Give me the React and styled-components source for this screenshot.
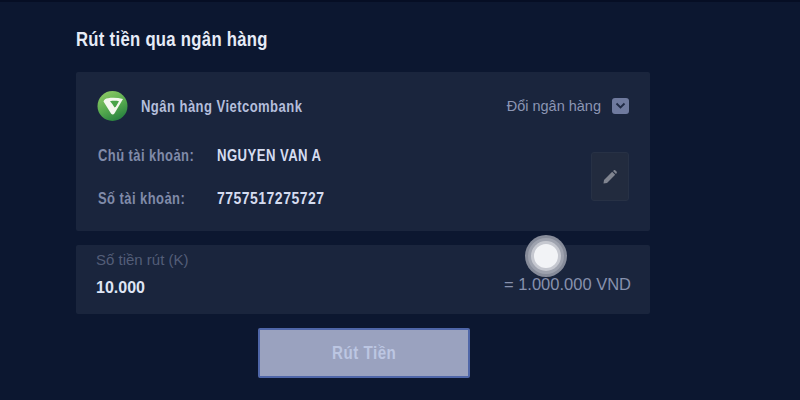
import React from "react";
import styled, { createGlobalStyle, css } from "styled-components";

const GlobalStyle = createGlobalStyle`
  html, body {
    margin: 0;
    padding: 0;
    height: 100%;
    background-color: #0c1730;
    overflow: hidden;
  }
`;

// no condensed family is installed, so squeeze the bold labels sideways
const condensed = (ratio) => css`
  display: inline-block;
  white-space: nowrap;
  transform: scaleX(${ratio});
  transform-origin: left center;
`;

const Page = styled.div`
  position: relative;
  box-sizing: border-box;
  width: 800px;
  height: 400px;
  padding: 26px 150px 0 76px;
  border-top: 2px solid #060e24;
  background-color: #0c1730;
  font-family: "Liberation Sans", sans-serif;
`;

const Title = styled.h1`
  margin: 0 0 21px;
  height: 23px;
  font-size: 19.5px;
  line-height: 23px;
  font-weight: 700;
  letter-spacing: 0.35px;
  color: #e6ebf7;
  ${condensed(0.855)}
`;

const BankCard = styled.section`
  box-sizing: border-box;
  height: 159px;
  padding: 19px 21px 0 21px;
  background-color: #1a253d;
  border-radius: 2px;
`;

const BankRow = styled.div`
  display: flex;
  align-items: center;
  height: 30px;
`;

const BankName = styled.span`
  margin-left: 13px;
  padding-top: 2px;
  font-size: 16px;
  font-weight: 700;
  letter-spacing: 0.55px;
  color: #b4bedb;
  ${condensed(0.815)}
`;

const ChangeBank = styled.div`
  display: flex;
  align-items: center;
  gap: 11px;
  margin-left: auto;
`;

const ChangeText = styled.span`
  font-size: 14.5px;
  color: #8c96b4;
`;

const ChevronBox = styled.span`
  display: flex;
  align-items: center;
  justify-content: center;
  width: 17px;
  height: 16px;
  border-radius: 3px;
  background-color: #6f7a9e;
`;

const DetailArea = styled.div`
  display: flex;
  align-items: flex-start;
  justify-content: space-between;
  margin-top: 24px;
`;

const DetailList = styled.div`
  display: flex;
  flex-direction: column;
  gap: 22px;
  margin-left: 1px;
`;

const DetailRow = styled.div`
  display: grid;
  grid-template-columns: 119px auto;
  align-items: center;
  height: 21px;
  font-size: 16px;
  font-weight: 700;
  letter-spacing: 0.55px;
`;

const DetailLabel = styled.span`
  color: #808ba9;
  ${condensed(0.81)}
`;

const DetailValue = styled.span`
  color: #d5dcf0;
  ${(props) => condensed(props.$ratio)}
`;

const EditButton = styled.button`
  display: flex;
  align-items: center;
  justify-content: center;
  box-sizing: border-box;
  width: 38px;
  height: 49px;
  margin: 7px 0 0;
  padding: 0;
  border: 1px solid #273145;
  border-radius: 3px;
  background-color: #222b3e;
`;

const AmountCard = styled.section`
  display: flex;
  justify-content: space-between;
  box-sizing: border-box;
  height: 69px;
  margin-top: 14px;
  padding: 6px 19px 0 20px;
  background-color: #1a253d;
  border-radius: 2px;
`;

const AmountField = styled.div`
  display: flex;
  flex-direction: column;
  gap: 10px;
`;

const AmountLabel = styled.span`
  font-size: 15px;
  line-height: 18px;
  color: #535d78;
`;

const AmountValue = styled.span`
  font-size: 16px;
  line-height: 18px;
  font-weight: 700;
  color: #dfe5f5;
`;

const Converted = styled.span`
  margin-top: 24px;
  font-size: 16.5px;
  line-height: 18px;
  color: #8791ad;
`;

const SubmitRow = styled.div`
  display: flex;
  justify-content: center;
  margin: 14px 0 0 1px;
`;

const SubmitButton = styled.button`
  box-sizing: border-box;
  width: 212px;
  height: 50px;
  border: 2px solid #4f66a8;
  border-radius: 2px;
  background-color: #9aa2bf;
`;

const SubmitLabel = styled.span`
  margin-left: 2px;
  font-family: "Liberation Sans", sans-serif;
  font-size: 18px;
  font-weight: 700;
  letter-spacing: 0.6px;
  color: #bcc6e2;
  ${condensed(0.84)}
  transform-origin: center center;
`;

const TouchDot = styled.div`
  position: absolute;
  left: 534px;
  top: 242px;
  width: 24px;
  height: 24px;
  border-radius: 50%;
  background-color: #f2f3f6;
  box-shadow:
    0 0 0 3px #c6c8d0,
    0 0 0 6px #9ea2ae,
    0 0 0 9px #878c9a;
`;

function VietcombankLogo() {
  return (
    <svg width="31" height="30" viewBox="0 0 31 30">
      <defs>
        <linearGradient id="vcb" x1="0.2" y1="0" x2="0.7" y2="1">
          <stop offset="0" stopColor="#8fcb66" />
          <stop offset="0.55" stopColor="#55a94e" />
          <stop offset="1" stopColor="#257f3e" />
        </linearGradient>
      </defs>
      <circle cx="15.5" cy="15" r="15" fill="url(#vcb)" />
      <path
        d="M6.5 10.5 C7 8.5 8.5 7.5 11 7.2 C16 6.6 21 6.8 26 8 L17.4 22.6 C16.6 23.8 15 23.8 14.2 22.8 Z"
        fill="#f4f7ef"
      />
      <path
        d="M13 10.2 C16 9.6 19.6 9.7 22 10.2 L18.8 15.8 L17.6 16.6 C16.4 14.2 14.8 12 13 10.2 Z"
        fill="#4aa349"
      />
    </svg>
  );
}

function Chevron() {
  return (
    <svg width="11" height="8" viewBox="0 0 11 8" fill="none">
      <path d="M1.5 1.5 L5.5 5.5 L9.5 1.5" stroke="#1f2a44" strokeWidth="1.8" />
    </svg>
  );
}

function Pencil() {
  return (
    <svg width="14" height="14" viewBox="0 0 14 14">
      <path d="M0.5 13.5 L1 10 L9.2 1.8 L12.2 4.8 L4 13 Z" fill="#80848f" />
      <path d="M10 1 L11 0.3 C11.5 0 12 0 12.4 0.4 L13.6 1.6 C14 2 14 2.5 13.7 3 L13 4 Z" fill="#80848f" />
    </svg>
  );
}

export default function App() {
  return (
    <>
      <GlobalStyle />
      <Page>
        <Title>Rút tiền qua ngân hàng</Title>

        <BankCard>
          <BankRow>
            <VietcombankLogo />
            <BankName>Ngân hàng Vietcombank</BankName>
            <ChangeBank>
              <ChangeText>Đổi ngân hàng</ChangeText>
              <ChevronBox>
                <Chevron />
              </ChevronBox>
            </ChangeBank>
          </BankRow>

          <DetailArea>
            <DetailList>
              <DetailRow>
                <DetailLabel>Chủ tài khoản:</DetailLabel>
                <DetailValue $ratio={0.82}>NGUYEN VAN A</DetailValue>
              </DetailRow>
              <DetailRow>
                <DetailLabel>Số tài khoản:</DetailLabel>
                <DetailValue $ratio={0.875}>7757517275727</DetailValue>
              </DetailRow>
            </DetailList>
            <EditButton>
              <Pencil />
            </EditButton>
          </DetailArea>
        </BankCard>

        <AmountCard>
          <AmountField>
            <AmountLabel>Số tiền rút (K)</AmountLabel>
            <AmountValue>10.000</AmountValue>
          </AmountField>
          <Converted>= 1.000.000 VND</Converted>
        </AmountCard>

        <SubmitRow>
          <SubmitButton>
            <SubmitLabel>Rút Tiền</SubmitLabel>
          </SubmitButton>
        </SubmitRow>

        <TouchDot />
      </Page>
    </>
  );
}
